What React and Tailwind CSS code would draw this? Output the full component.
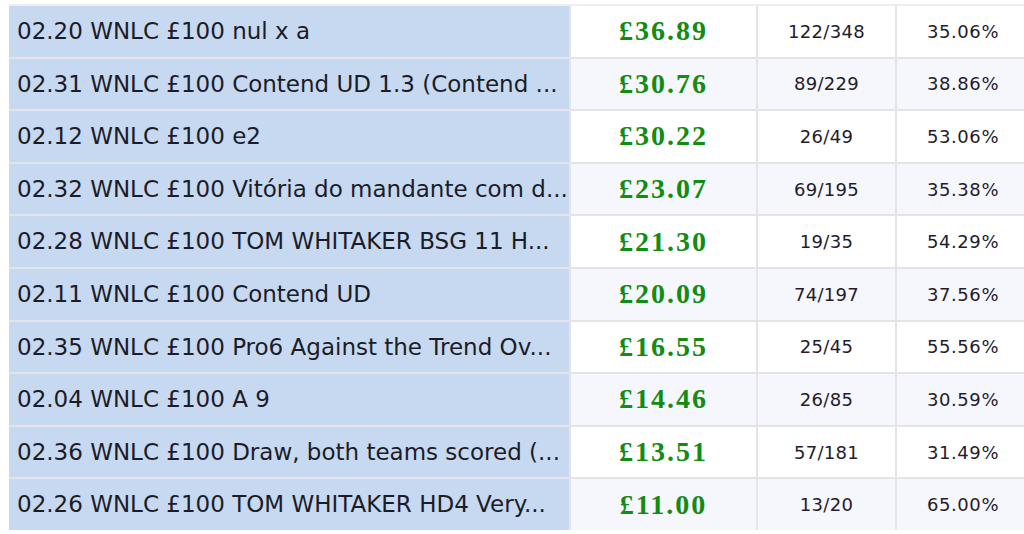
const rows = [
  { name: '02.20 WNLC £100 nul x a', profit: '£36.89', record: '122/348', pct: '35.06%' },
  { name: '02.31 WNLC £100 Contend UD 1.3 (Contend ...', profit: '£30.76', record: '89/229', pct: '38.86%' },
  { name: '02.12 WNLC £100 e2', profit: '£30.22', record: '26/49', pct: '53.06%' },
  { name: '02.32 WNLC £100 Vitória do mandante com d...', profit: '£23.07', record: '69/195', pct: '35.38%' },
  { name: '02.28 WNLC £100 TOM WHITAKER BSG 11 H...', profit: '£21.30', record: '19/35', pct: '54.29%' },
  { name: '02.11 WNLC £100 Contend UD', profit: '£20.09', record: '74/197', pct: '37.56%' },
  { name: '02.35 WNLC £100 Pro6 Against the Trend Ov...', profit: '£16.55', record: '25/45', pct: '55.56%' },
  { name: '02.04 WNLC £100 A 9', profit: '£14.46', record: '26/85', pct: '30.59%' },
  { name: '02.36 WNLC £100 Draw, both teams scored (...', profit: '£13.51', record: '57/181', pct: '31.49%' },
  { name: '02.26 WNLC £100 TOM WHITAKER HD4 Very...', profit: '£11.00', record: '13/20', pct: '65.00%' },
];

const sans = "font-['DejaVu_Sans',Tahoma,sans-serif]";

export default function App() {
  return (
    <div className="w-[1024px] h-[534px] overflow-hidden bg-white pt-[4px] pl-[9px]">
      <div className="w-[1040px] grid grid-cols-[560px_185px_137px_132px] gap-[2px] bg-[#e4e4e8] border-t-[2px] border-[#eeeeee]">
        {rows.map((r, i) => {
          const alt = i % 2 === 1 ? 'bg-[#f6f6fd]' : 'bg-white';
          return [
            <div key={`n${i}`} className={`h-[50.6px] bg-[#c6d9f0] flex items-center pl-[8px] ${sans} text-[23px] text-[#1c1c28] whitespace-nowrap overflow-hidden`}>
              {r.name}
            </div>,
            <div key={`p${i}`} className={`h-[50.6px] ${alt} flex items-center justify-center font-['Liberation_Serif',serif] font-bold text-[28px] tracking-[2px] text-[#128c12]`}>
              {r.profit}
            </div>,
            <div key={`r${i}`} className={`h-[50.6px] ${alt} flex items-center justify-center ${sans} text-[18px] text-[#241c2c] tracking-[0.3px]`}>
              {r.record}
            </div>,
            <div key={`c${i}`} className={`h-[50.6px] ${alt} flex items-center justify-center ${sans} text-[18px] text-[#241c2c] tracking-[0.6px]`}>
              {r.pct}
            </div>,
          ];
        })}
      </div>
    </div>
  );
}
